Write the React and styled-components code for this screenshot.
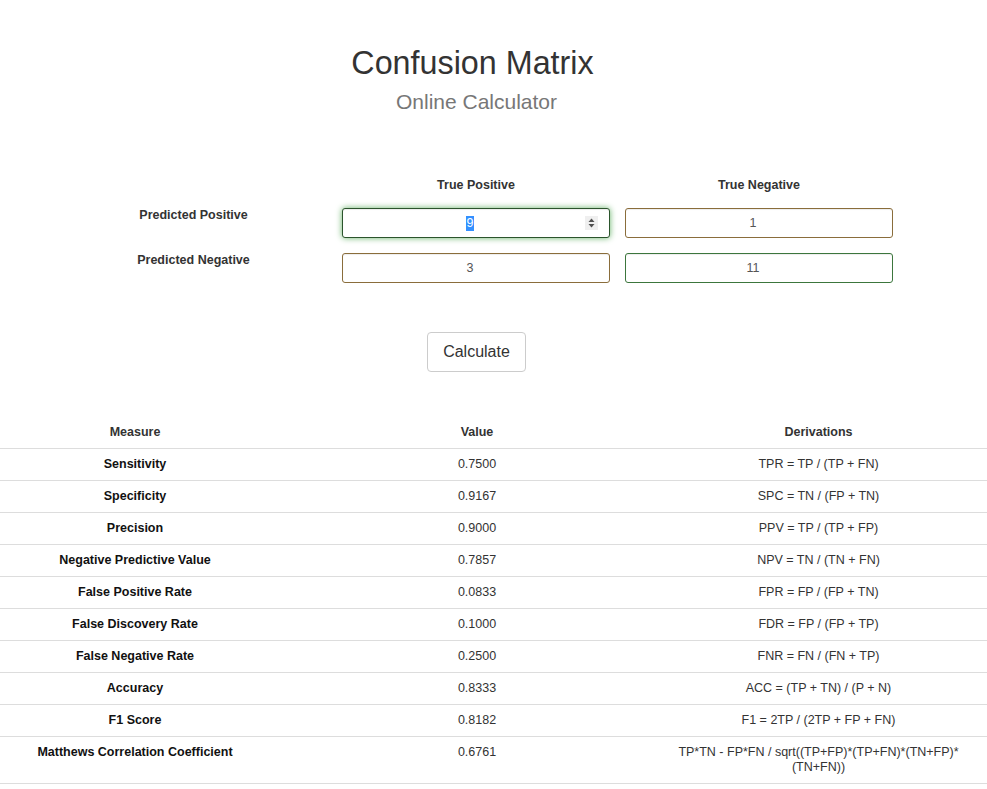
import React from "react";
import styled, { createGlobalStyle } from "styled-components";

const GlobalStyle = createGlobalStyle`
  body {
    margin: 0;
    background: #fff;
    color: #333;
    font-family: "Liberation Sans", Arial, Helvetica, sans-serif;
    overflow-x: hidden;
  }
`;

const Page = styled.div`
  width: calc(100% + 34px);
  margin-left: -34px;
  padding-top: 45px;
  padding-bottom: 20px;
`;

const Header = styled.header`
  text-align: center;
`;

const Title = styled.h1`
  margin: 0;
  padding-right: 8px;
  font-size: 32.3px;
  line-height: 36px;
  font-weight: normal;
  color: #333;
`;

const Subtitle = styled.h2`
  margin: 9px 0 0;
  font-size: 21px;
  line-height: 24px;
  font-weight: normal;
  color: #777;
`;

const Form = styled.form`
  width: 833px;
  margin: 64px auto 0;
  display: grid;
  grid-template-columns: 267px 268px 268px;
  grid-template-rows: 15px 30px 30px;
  column-gap: 15px;
  row-gap: 15px;
  font-size: 12.5px;
  line-height: 15px;
`;

const ColLabel = styled.div`
  text-align: center;
  font-weight: bold;
  color: #333;
`;

const RowLabel = styled.div`
  text-align: center;
  font-weight: bold;
  color: #333;
  align-self: start;
`;

const tones = {
  success: "#3c763d",
  warning: "#8a6d3b",
};

const Field = styled.div`
  position: relative;
  box-sizing: border-box;
  height: 30px;
  display: flex;
  align-items: center;
  justify-content: center;
  padding: 0 22px 0 10px;
  border: 1px solid ${(p) => (p.focused ? "#2b542c" : tones[p.tone])};
  border-radius: 3px;
  color: #555;
  background: #fff;
  box-shadow: ${(p) =>
    p.focused
      ? "inset 0 1px 1px rgba(0,0,0,.075), 0 0 6px #67b168"
      : "inset 0 1px 1px rgba(0,0,0,.075)"};
`;

const Selected = styled.span`
  background: #3390ff;
  color: #fff;
  padding: 0 0.5px;
`;

const Spinner = styled.span`
  position: absolute;
  right: 11px;
  top: 7px;
  width: 13px;
  height: 14px;
  background: #efefef;
  display: flex;
  align-items: center;
  justify-content: center;
`;

const ButtonRow = styled.div`
  margin-top: 49px;
  text-align: center;
`;

const Button = styled.button`
  font-family: inherit;
  font-size: 16px;
  line-height: 22px;
  padding: 8px 15px;
  color: #333;
  background: #fff;
  border: 1px solid #ccc;
  border-radius: 4px;
  cursor: pointer;
`;

const Table = styled.table`
  width: 100%;
  margin-top: 45px;
  border-collapse: collapse;
  font-size: 12.5px;
  line-height: 15px;
  color: #333;
`;

const Th = styled.th`
  padding: 8px;
  text-align: center;
  font-weight: bold;
  border-bottom: 1px solid #ddd;
  vertical-align: top;
`;

const Cell = styled.td`
  padding: 8px;
  text-align: center;
  vertical-align: top;
  border-bottom: 1px solid #ddd;
  font-weight: ${(p) => (p.strong ? "bold" : "normal")};
  color: ${(p) => (p.strong ? "#111" : "#333")};
`;

const SpinIcon = () => (
  <svg width="7" height="10" viewBox="0 0 7 10">
    <path d="M3.5 0.5 L6.5 4 L0.5 4 Z" fill="#505050" />
    <path d="M0.5 6 L6.5 6 L3.5 9.5 Z" fill="#505050" />
  </svg>
);

const rows = [
  ["Sensitivity", "0.7500", "TPR = TP / (TP + FN)"],
  ["Specificity", "0.9167", "SPC = TN / (FP + TN)"],
  ["Precision", "0.9000", "PPV = TP / (TP + FP)"],
  ["Negative Predictive Value", "0.7857", "NPV = TN / (TN + FN)"],
  ["False Positive Rate", "0.0833", "FPR = FP / (FP + TN)"],
  ["False Discovery Rate", "0.1000", "FDR = FP / (FP + TP)"],
  ["False Negative Rate", "0.2500", "FNR = FN / (FN + TP)"],
  ["Accuracy", "0.8333", "ACC = (TP + TN) / (P + N)"],
  ["F1 Score", "0.8182", "F1 = 2TP / (2TP + FP + FN)"],
];

export default function App() {
  return (
    <Page>
      <GlobalStyle />
      <Header>
        <Title>Confusion Matrix</Title>
        <Subtitle>Online Calculator</Subtitle>
      </Header>

      <Form onSubmit={(e) => e.preventDefault()}>
        <div />
        <ColLabel>True Positive</ColLabel>
        <ColLabel>True Negative</ColLabel>

        <RowLabel>Predicted Positive</RowLabel>
        <Field tone="success" focused>
          <Selected>9</Selected>
          <Spinner>
            <SpinIcon />
          </Spinner>
        </Field>
        <Field tone="warning">1</Field>

        <RowLabel>Predicted Negative</RowLabel>
        <Field tone="warning">3</Field>
        <Field tone="success">11</Field>
      </Form>

      <ButtonRow>
        <Button type="button">Calculate</Button>
      </ButtonRow>

      <Table>
        <colgroup>
          <col style={{ width: 338 }} />
          <col style={{ width: 346 }} />
          <col />
        </colgroup>
        <thead>
          <tr>
            <Th>Measure</Th>
            <Th>Value</Th>
            <Th>Derivations</Th>
          </tr>
        </thead>
        <tbody>
          {rows.map(([name, value, formula]) => (
            <tr key={name}>
              <Cell strong>{name}</Cell>
              <Cell>{value}</Cell>
              <Cell>{formula}</Cell>
            </tr>
          ))}
          <tr>
            <Cell strong>Matthews Correlation Coefficient</Cell>
            <Cell>0.6761</Cell>
            <Cell>
              TP*TN - FP*FN / sqrt((TP+FP)*(TP+FN)*(TN+FP)*
              <wbr />
              (TN+FN))
            </Cell>
          </tr>
        </tbody>
      </Table>
    </Page>
  );
}
